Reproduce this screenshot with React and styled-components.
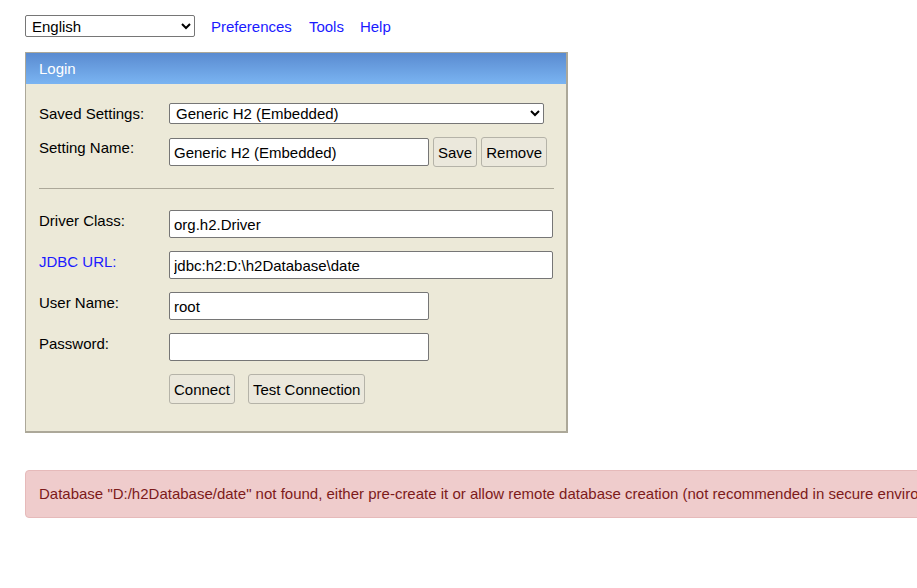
import React from "react";
import styled, { createGlobalStyle } from "styled-components";

const Global = createGlobalStyle`
  html, body { margin: 0; padding: 0; background: #fff; overflow: hidden; }
  body { font-family: "Liberation Sans", Arial, sans-serif; font-size: 15px; color: #000; }
`;

const Page = styled.div`
  padding: 15px 25px;
  display: flex;
  flex-direction: column;
  align-items: flex-start;
`;

const TopBar = styled.div`
  display: flex;
  align-items: center;
  height: 22px;
`;

const Select = styled.select`
  font-family: "Liberation Sans", Arial, sans-serif;
  font-size: 15px;
  height: ${(p) => p.$h || 22}px;
  width: ${(p) => p.$w}px;
  border: 1px solid #767676;
  border-radius: 2px;
  background: #fff;
  color: #000;
  padding: 0 2px;
  margin: 0;
  box-sizing: border-box;
`;

const NavLink = styled.a`
  color: #1a1aff;
  text-decoration: none;
  margin-left: ${(p) => p.$ml}px;
  line-height: 17px;
`;

const Panel = styled.div`
  margin-top: 15px;
  width: 543px;
  box-sizing: border-box;
  border: 1px solid #aca899;
  border-right-width: 2px;
  border-bottom-width: 2px;
  background: #ece9d8;
`;

const PanelHeader = styled.div`
  height: 31px;
  background: linear-gradient(#5a8bd0, #7ab4f2);
  color: #fff;
  display: flex;
  align-items: center;
  padding: 0 13px;
  font-size: 15px;
`;

const Form = styled.div`
  padding: 19px 12px 27px 13px;
  display: grid;
  grid-template-columns: 130px 1fr;
  row-gap: 13px;
  align-items: start;
`;

const Label = styled.div`
  padding-top: 2px;
  line-height: 17px;
  color: ${(p) => (p.$link ? "#1a1aff" : "#000")};
`;

const Field = styled.div`
  display: flex;
  align-items: center;
  gap: 4px;
`;

const Input = styled.input`
  font-family: "Liberation Sans", Arial, sans-serif;
  font-size: 15px;
  height: 28px;
  width: ${(p) => p.$w}px;
  box-sizing: border-box;
  border: 1px solid #767676;
  border-radius: 2px;
  padding: 0 4px;
  background: #fff;
  color: #000;
  margin: 0;
`;

const Button = styled.button`
  font-family: "Liberation Sans", Arial, sans-serif;
  font-size: 15px;
  height: 30px;
  box-sizing: border-box;
  padding: 0 4px;
  border: 1px solid #b5b3a8;
  border-radius: 3px;
  background: #ebe8dc;
  color: #000;
  margin: 0;
`;

const Divider = styled.hr`
  grid-column: 1 / -1;
  margin: 8px 0 8px;
  border: none;
  border-top: 1px solid #aca899;
  height: 0;
`;

const ButtonRow = styled.div`
  grid-column: 2;
  display: flex;
  gap: 13px;
`;

const Alert = styled.div`
  margin-top: 37px;
  padding: 14px 13px;
  line-height: 18px;
  white-space: nowrap;
  background: #efcccc;
  border: 1px solid #e6baba;
  border-radius: 4px;
  color: #7d1a1a;
`;

export default function App() {
  return (
    <>
      <Global />
      <Page>
        <TopBar>
          <Select $w={170} defaultValue="en">
            <option value="en">English</option>
          </Select>
          <NavLink href="#" $ml={16}>Preferences</NavLink>
          <NavLink href="#" $ml={17}>Tools</NavLink>
          <NavLink href="#" $ml={16}>Help</NavLink>
        </TopBar>
        <Panel>
          <PanelHeader>Login</PanelHeader>
          <Form>
            <Label>Saved Settings:</Label>
            <Field>
              <Select $w={375} $h={21} defaultValue="h2">
                <option value="h2">Generic H2 (Embedded)</option>
              </Select>
            </Field>
            <Label>Setting Name:</Label>
            <Field>
              <Input $w={260} defaultValue="Generic H2 (Embedded)" />
              <Button>Save</Button>
              <Button>Remove</Button>
            </Field>
            <Divider />
            <Label>Driver Class:</Label>
            <Field>
              <Input $w={384} defaultValue="org.h2.Driver" />
            </Field>
            <Label $link>JDBC URL:</Label>
            <Field>
              <Input $w={384} defaultValue="jdbc:h2:D:\h2Database\date" />
            </Field>
            <Label>User Name:</Label>
            <Field>
              <Input $w={260} defaultValue="root" />
            </Field>
            <Label>Password:</Label>
            <Field>
              <Input $w={260} type="password" defaultValue="" />
            </Field>
            <ButtonRow>
              <Button>Connect</Button>
              <Button>Test Connection</Button>
            </ButtonRow>
          </Form>
        </Panel>
        <Alert>
          Database "D:/h2Database/date" not found, either pre-create it or allow remote database creation (not recommended in secure environments)
        </Alert>
      </Page>
    </>
  );
}
